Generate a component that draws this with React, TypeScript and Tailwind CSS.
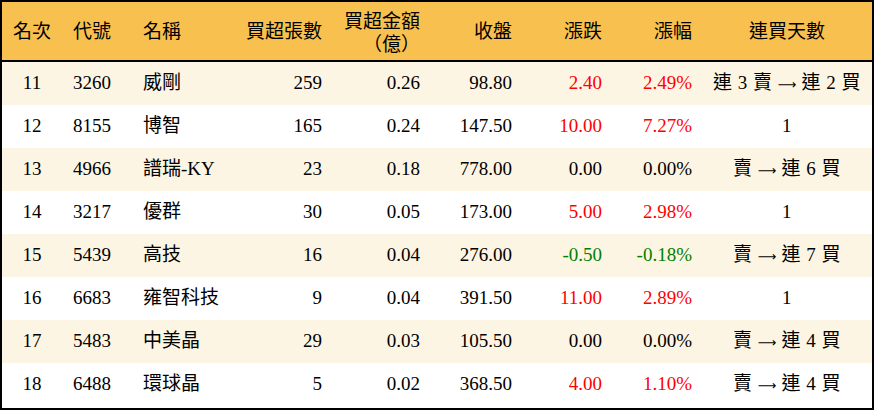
import React from "react";

type Row = {
  rank: string;
  code: string;
  name: string;
  vol: string;
  amt: string;
  close: string;
  chg: string;
  pct: string;
  streak: string;
};

const rows: Row[] = [
  { rank: "11", code: "3260", name: "威剛", vol: "259", amt: "0.26", close: "98.80", chg: "2.40", pct: "2.49%", streak: "連 3 賣 → 連 2 買" },
  { rank: "12", code: "8155", name: "博智", vol: "165", amt: "0.24", close: "147.50", chg: "10.00", pct: "7.27%", streak: "1" },
  { rank: "13", code: "4966", name: "譜瑞-KY", vol: "23", amt: "0.18", close: "778.00", chg: "0.00", pct: "0.00%", streak: "賣 → 連 6 買" },
  { rank: "14", code: "3217", name: "優群", vol: "30", amt: "0.05", close: "173.00", chg: "5.00", pct: "2.98%", streak: "1" },
  { rank: "15", code: "5439", name: "高技", vol: "16", amt: "0.04", close: "276.00", chg: "-0.50", pct: "-0.18%", streak: "賣 → 連 7 買" },
  { rank: "16", code: "6683", name: "雍智科技", vol: "9", amt: "0.04", close: "391.50", chg: "11.00", pct: "2.89%", streak: "1" },
  { rank: "17", code: "5483", name: "中美晶", vol: "29", amt: "0.03", close: "105.50", chg: "0.00", pct: "0.00%", streak: "賣 → 連 4 買" },
  { rank: "18", code: "6488", name: "環球晶", vol: "5", amt: "0.02", close: "368.50", chg: "4.00", pct: "1.10%", streak: "賣 → 連 4 買" },
];

const grid =
  "grid grid-cols-[60px_70px_100px_100px_98px_92px_90px_90px_170px]";

function colorOf(v: string) {
  if (v.startsWith("-")) return "text-[#008000]";
  if (parseFloat(v) === 0) return "text-black";
  return "text-[#ff0000]";
}

function Streak({ text }: { text: string }) {
  const parts = text.split("→");
  if (parts.length === 1) return <>{text}</>;
  return (
    <>
      {parts[0]}
      <span className="font-['DejaVu_Sans'] text-[13px] tracking-normal">⟶</span>
      {parts[1]}
    </>
  );
}

export default function App() {
  return (
    <div
      className="w-[874px] h-[410px] border-2 border-black bg-white text-black text-[19px]"
      style={{ fontFamily: '"Liberation Serif", "Noto Sans CJK TC", serif' }}
    >
      <div className={`${grid} h-[60px] bg-[#f8c14f] border-b-2 border-black items-center leading-[23px]`}>
        <div className="text-center">名次</div>
        <div className="pl-[11px]">代號</div>
        <div className="pl-[11px]">名稱</div>
        <div className="text-right pr-[10px]">買超張數</div>
        <div className="text-right pr-[10px] pt-[3px]">
          買超金額
          <br />
          （億）
        </div>
        <div className="text-right pr-[10px]">收盤</div>
        <div className="text-right pr-[10px]">漲跌</div>
        <div className="text-right pr-[10px]">漲幅</div>
        <div className="text-center">連買天數</div>
      </div>
      {rows.map((r, i) => (
        <div
          key={r.rank}
          className={`${grid} h-[43px] items-center ${i % 2 === 0 ? "bg-[#fdf5e3]" : "bg-white"}`}
        >
          <div className="text-center">{r.rank}</div>
          <div className="pl-[11px]">{r.code}</div>
          <div className="pl-[11px]">{r.name}</div>
          <div className="text-right pr-[10px]">{r.vol}</div>
          <div className="text-right pr-[10px]">{r.amt}</div>
          <div className="text-right pr-[10px]">{r.close}</div>
          <div className={`text-right pr-[10px] ${colorOf(r.chg)}`}>{r.chg}</div>
          <div className={`text-right pr-[10px] ${colorOf(r.pct)}`}>{r.pct}</div>
          <div className="text-center whitespace-pre tracking-[0.5px]">
            <Streak text={r.streak} />
          </div>
        </div>
      ))}
    </div>
  );
}
